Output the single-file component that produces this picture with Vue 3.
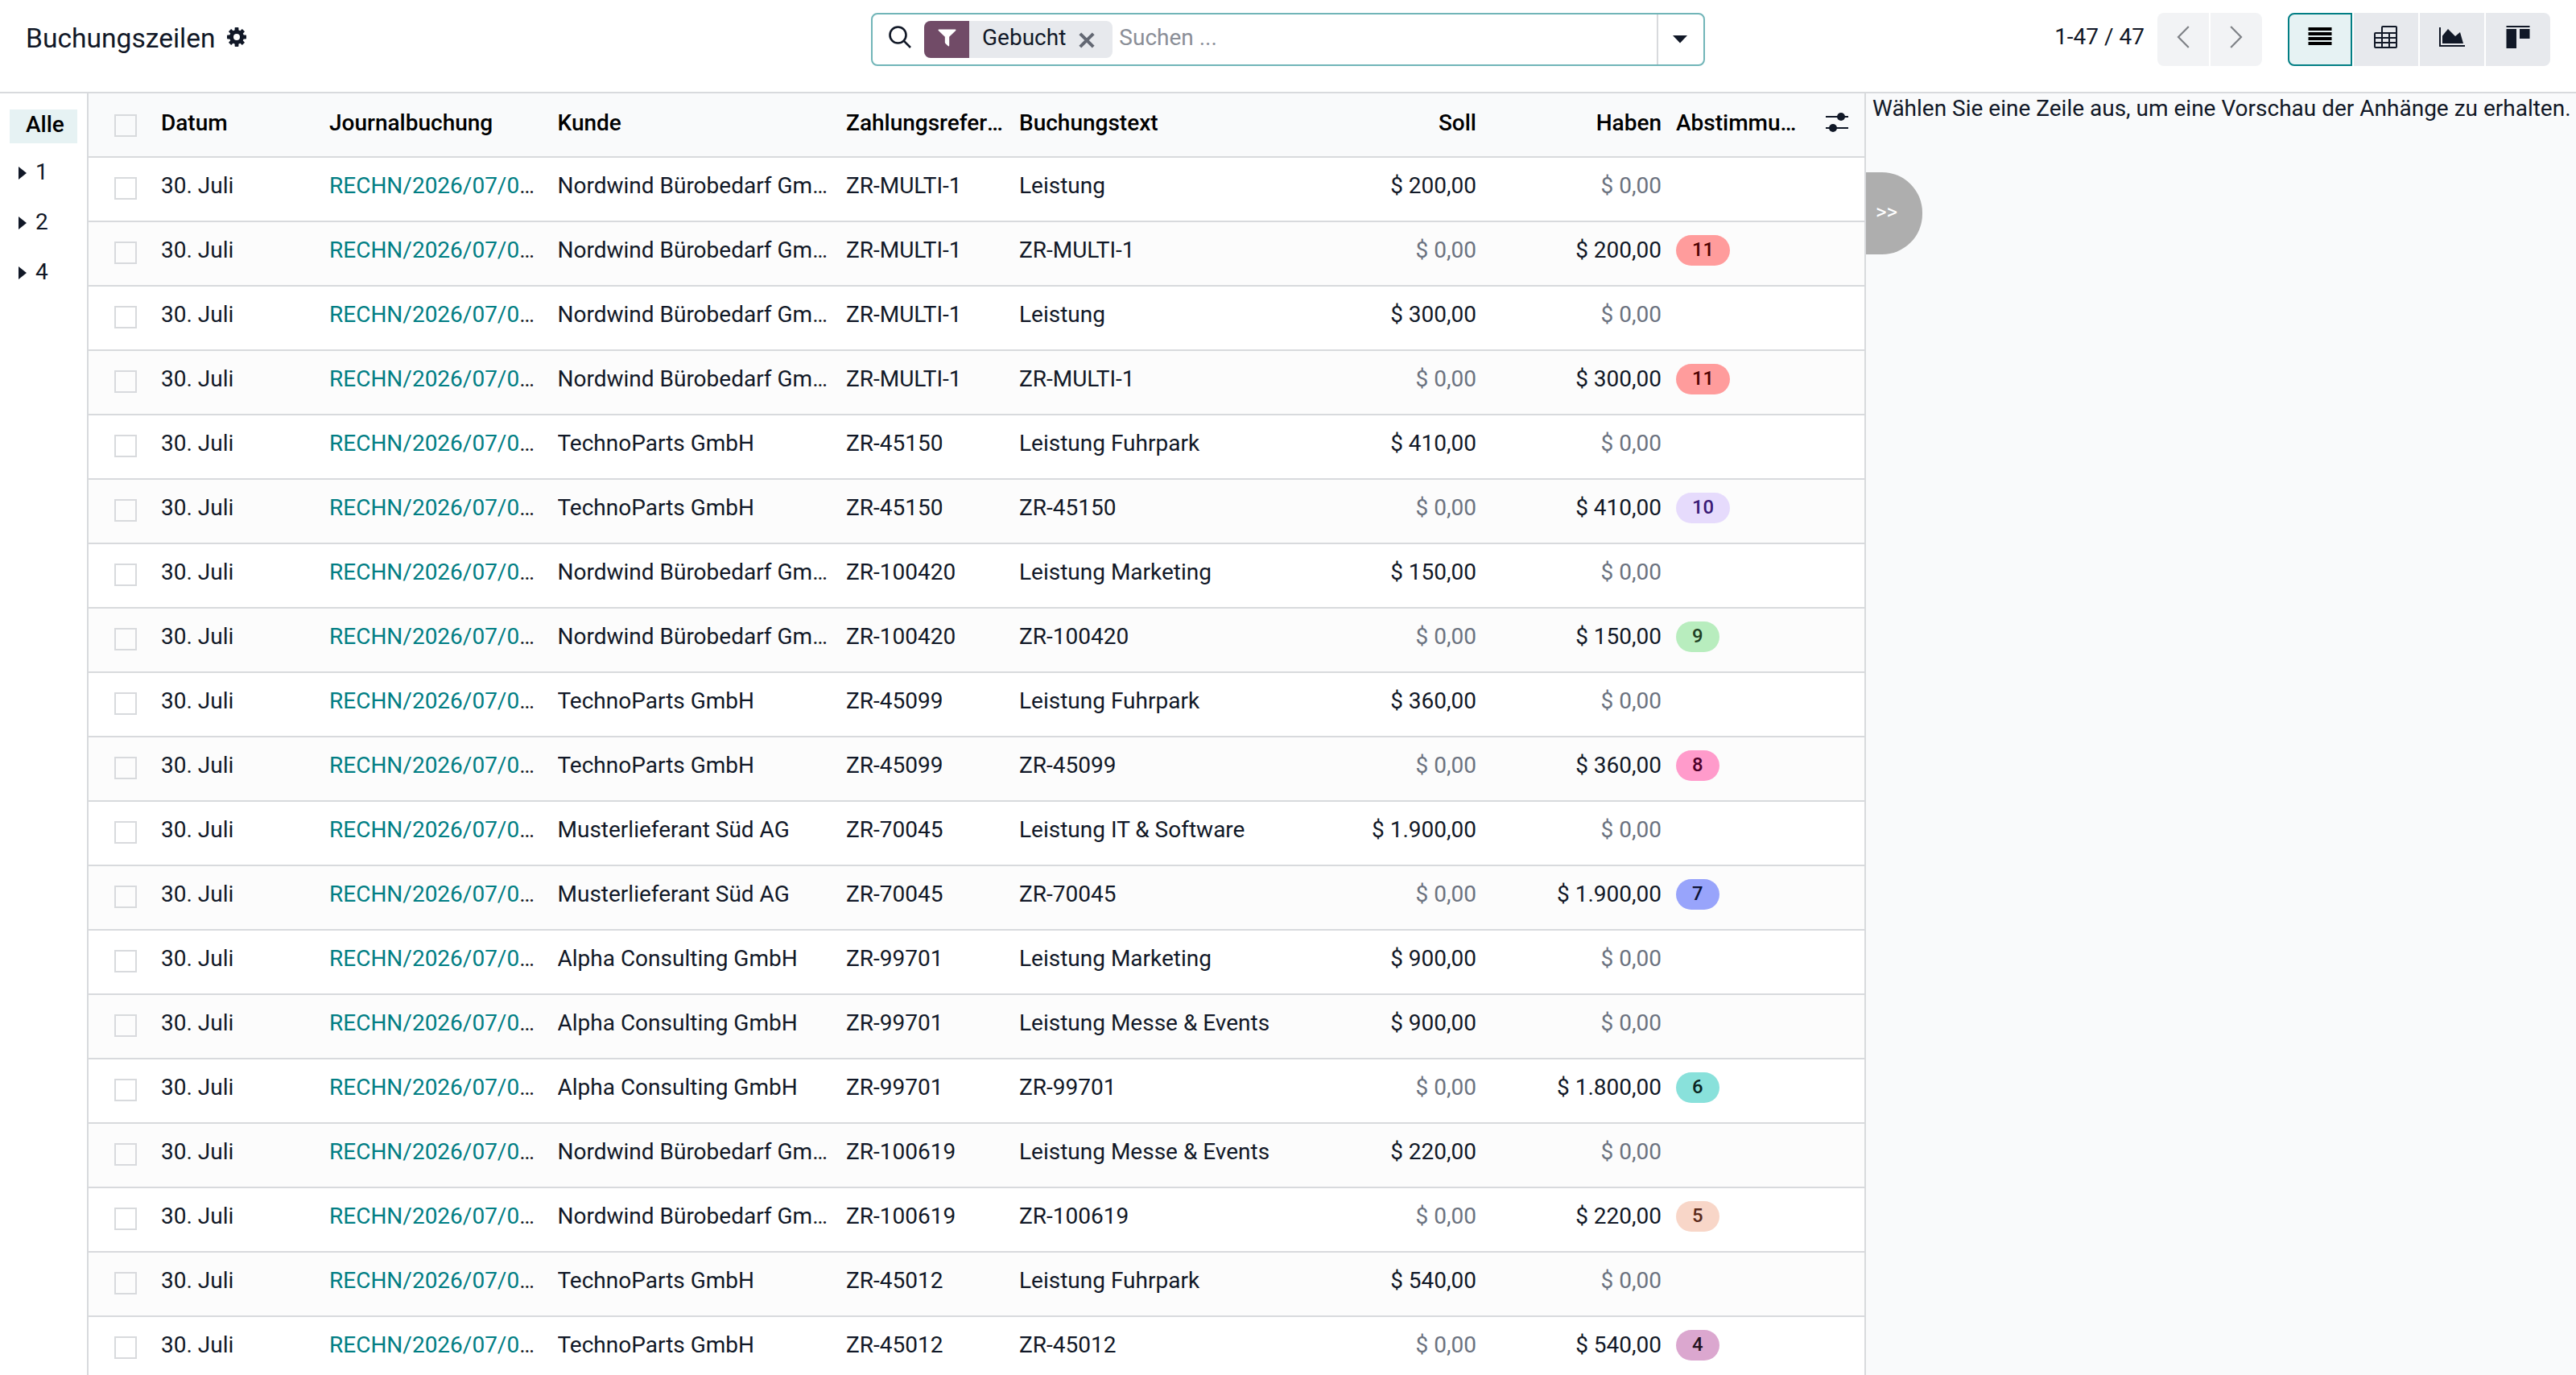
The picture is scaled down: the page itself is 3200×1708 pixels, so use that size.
<template>
    <div class="journal-items">
        <header class="control-panel">
            <div class="breadcrumb">
                <h1>Buchungszeilen</h1>
                <svg class="gear" viewBox="0 0 24 24">
                    <g fill="currentColor">
                        <rect
                            v-for="angle in [0, 45, 90, 135]"
                            :key="angle"
                            x="9.6"
                            y="0"
                            width="4.8"
                            height="24"
                            rx="0.8"
                            :transform="`rotate(${angle} 12 12)`"
                        />
                        <circle cx="12" cy="12" r="9" />
                    </g>
                    <circle cx="12" cy="12" r="4" fill="#fff" />
                </svg>
            </div>

            <div class="search">
                <svg class="search-icon" viewBox="0 0 28 28">
                    <circle cx="11.5" cy="11.5" r="10" />
                    <path d="M18.6 18.6 L27 27" />
                </svg>
                <div class="facet">
                    <span class="facet-icon">
                        <svg viewBox="0 0 24 22">
                            <path d="M1 0 H23 Q24 .8 23.2 1.7 L14.8 9.8 V21 Q14.6 22.3 13.4 21.7 L9.8 18.2 Q9.2 17.6 9.2 16.8 V9.8 L.8 1.7 Q0 .8 1 0 Z" />
                        </svg>
                    </span>
                    <span class="facet-label">Gebucht</span>
                    <svg class="facet-remove" viewBox="0 0 20 20">
                        <path d="M1.8 1.8 L18.2 18.2 M18.2 1.8 L1.8 18.2" />
                    </svg>
                </div>
                <span class="placeholder">Suchen ...</span>
                <button class="search-toggle">
                    <svg viewBox="0 0 18 10"><path d="M0 0 H18 L9 9.5 Z" /></svg>
                </button>
            </div>

            <div class="actions">
                <span class="pager-count">1-47 / 47</span>
                <div class="btn-group pager">
                    <button>
                        <svg viewBox="0 0 16 28"><path d="M14.8 1 L2 14 L14.8 27" /></svg>
                    </button>
                    <button>
                        <svg viewBox="0 0 16 28"><path d="M1.2 1 L14 14 L1.2 27" /></svg>
                    </button>
                </div>
                <div class="btn-group views">
                    <button class="active">
                        <svg viewBox="0 0 30 28">
                            <path d="M.5 2 H29.5 V6 H.5 Z M.5 8 H29.5 V12 H.5 Z M.5 14 H29.5 V18 H.5 Z M.5 20 H29.5 V24 H.5 Z" />
                        </svg>
                    </button>
                    <button>
                        <svg class="stroked" viewBox="0 0 30 28">
                            <path d="M10 9 V2 Q10 1 11 1 H27 Q28 1 28 2 V26 Q28 27 27 27 H2 Q1 27 1 26 V10 Q1 9 2 9 H28 M1 15 H28 M1 21 H28 M10 9 V27 M19 9 V27" />
                        </svg>
                    </button>
                    <button>
                        <svg viewBox="0 0 32 28">
                            <path d="M0 2 H2 V24 H32 V26 H0 Z M4 22 V12.6 L11 4 L20 13 L26 8 L30 22 Z" />
                        </svg>
                    </button>
                    <button>
                        <svg viewBox="0 0 30 28">
                            <path d="M.5 0 H29.5 V2 H.5 Z M.5 4 H13 V28 H.5 Z M17 4 H29.5 V16 H17 Z" />
                        </svg>
                    </button>
                </div>
            </div>
        </header>

        <div class="content">
            <aside class="account-groups">
                <div class="group-all">Alle</div>
                <div v-for="group in groups" :key="group" class="group">
                    <svg viewBox="0 0 10 16"><path d="M0 0 L10 8 L0 16 Z" /></svg>
                    <span>{{ group }}</span>
                </div>
            </aside>

            <main class="list">
                <div class="row head">
                    <span class="checkbox"></span>
                    <span class="cell">Datum</span>
                    <span class="cell">Journalbuchung</span>
                    <span class="cell">Kunde</span>
                    <span class="cell">Zahlungsreferenz</span>
                    <span class="cell">Buchungstext</span>
                    <span class="cell number">Soll</span>
                    <span class="cell number">Haben</span>
                    <span class="cell">Abstimmungsnummer</span>
                    <svg class="columns-toggle" viewBox="0 0 28 24">
                        <path d="M0 4 H28 V6 H0 Z M0 18 H28 V20 H0 Z" />
                        <circle cx="19" cy="5" r="5" />
                        <circle cx="9" cy="19" r="5" />
                    </svg>
                </div>

                <div v-for="(line, i) in lines" :key="i" class="row">
                    <span class="checkbox"></span>
                    <span class="cell">30. Juli</span>
                    <span class="cell"><a>RECHN/2026/07/0001</a></span>
                    <span class="cell">{{ line.partner }}</span>
                    <span class="cell">{{ line.payRef }}</span>
                    <span class="cell">{{ line.label }}</span>
                    <span class="cell number" :class="{ muted: !line.debit }">{{ money(line.debit) }}</span>
                    <span class="cell number" :class="{ muted: !line.credit }">{{ money(line.credit) }}</span>
                    <span class="cell">
                        <span v-if="line.match" class="badge" :class="`match-${line.match}`">{{ line.match }}</span>
                    </span>
                </div>
            </main>

            <section class="preview">
                <p>Wählen Sie eine Zeile aus, um eine Vorschau der Anhänge zu erhalten.</p>
                <button class="preview-toggle">&gt;&gt;</button>
            </section>
        </div>
    </div>
</template>

<script setup>
const groups = [1, 2, 4];

const nordwind = 'Nordwind Bürobedarf GmbH';
const techno = 'TechnoParts GmbH';
const muster = 'Musterlieferant Süd AG';
const alpha = 'Alpha Consulting GmbH';

const lines = [
    { partner: nordwind, payRef: 'ZR-MULTI-1', label: 'Leistung', debit: 200, credit: 0 },
    { partner: nordwind, payRef: 'ZR-MULTI-1', label: 'ZR-MULTI-1', debit: 0, credit: 200, match: 11 },
    { partner: nordwind, payRef: 'ZR-MULTI-1', label: 'Leistung', debit: 300, credit: 0 },
    { partner: nordwind, payRef: 'ZR-MULTI-1', label: 'ZR-MULTI-1', debit: 0, credit: 300, match: 11 },
    { partner: techno, payRef: 'ZR-45150', label: 'Leistung Fuhrpark', debit: 410, credit: 0 },
    { partner: techno, payRef: 'ZR-45150', label: 'ZR-45150', debit: 0, credit: 410, match: 10 },
    { partner: nordwind, payRef: 'ZR-100420', label: 'Leistung Marketing', debit: 150, credit: 0 },
    { partner: nordwind, payRef: 'ZR-100420', label: 'ZR-100420', debit: 0, credit: 150, match: 9 },
    { partner: techno, payRef: 'ZR-45099', label: 'Leistung Fuhrpark', debit: 360, credit: 0 },
    { partner: techno, payRef: 'ZR-45099', label: 'ZR-45099', debit: 0, credit: 360, match: 8 },
    { partner: muster, payRef: 'ZR-70045', label: 'Leistung IT & Software', debit: 1900, credit: 0 },
    { partner: muster, payRef: 'ZR-70045', label: 'ZR-70045', debit: 0, credit: 1900, match: 7 },
    { partner: alpha, payRef: 'ZR-99701', label: 'Leistung Marketing', debit: 900, credit: 0 },
    { partner: alpha, payRef: 'ZR-99701', label: 'Leistung Messe & Events', debit: 900, credit: 0 },
    { partner: alpha, payRef: 'ZR-99701', label: 'ZR-99701', debit: 0, credit: 1800, match: 6 },
    { partner: nordwind, payRef: 'ZR-100619', label: 'Leistung Messe & Events', debit: 220, credit: 0 },
    { partner: nordwind, payRef: 'ZR-100619', label: 'ZR-100619', debit: 0, credit: 220, match: 5 },
    { partner: techno, payRef: 'ZR-45012', label: 'Leistung Fuhrpark', debit: 540, credit: 0 },
    { partner: techno, payRef: 'ZR-45012', label: 'ZR-45012', debit: 0, credit: 540, match: 4 }
];

function money(value) {
    const whole = String(value).replace(/\B(?=(\d{3})+$)/g, '.');
    return `$ ${whole},00`;
}
</script>

<style>
body {
    margin: 0;
    overflow: hidden;
}
</style>

<style scoped>
.journal-items {
    display: flex;
    flex-direction: column;
    height: 100vh;
    overflow: hidden;
    background: #fff;
    color: #111827;
    font-family: Roboto, "Liberation Sans", sans-serif;
    font-size: 28px;
    line-height: 42px;
}

.journal-items *,
.journal-items {
    box-sizing: border-box;
}

svg {
    display: block;
    flex-shrink: 0;
    fill: currentColor;
}

button {
    display: flex;
    align-items: center;
    justify-content: center;
    padding: 0;
    border: 0;
    color: inherit;
    font: inherit;
}

/* ─── Control panel ───────────────────────────── */
.control-panel {
    display: grid;
    grid-template-columns: 1050px 1036px 1fr;
    flex-shrink: 0;
    height: 116px;
    padding: 16px 32px 0;
    border-bottom: 2px solid #d8dadd;
}

.breadcrumb {
    display: flex;
    gap: 14px;
    height: 60px;
}

h1 {
    margin: 7px 0 0;
    font-size: 33.6px;
    font-weight: 400;
    line-height: 49px;
}

.gear {
    width: 24px;
    height: 24px;
    margin-top: 18px;
}

/* ─── Search ──────────────────────────────────── */
.search {
    display: flex;
    height: 66px;
    padding-left: 20px;
    border: 2px solid #71b5b8;
    border-radius: 8px;
}

.search-icon {
    width: 28px;
    height: 28px;
    margin-top: 14px;
    fill: none;
    stroke: currentColor;
    stroke-width: 2.6;
}

.facet {
    display: flex;
    height: 46px;
    margin: 8px 0 0 16px;
    border-radius: 8px;
    background: #e7e9ed;
    overflow: hidden;
}

.facet-icon {
    width: 56px;
    padding: 10px 0 0 17px;
    background: #714b67;
    color: #fff;
}

.facet-icon svg {
    width: 23px;
    height: 22px;
}

.facet-label {
    margin: 0 0 0 16px;
}

.facet-remove {
    width: 20px;
    height: 20px;
    margin: 14px 22px 0 16px;
    fill: none;
    stroke: #636873;
    stroke-width: 4;
}

.placeholder {
    flex: 1;
    margin: 8px 0 0 8px;
    color: #8a8e97;
}

.search-toggle {
    width: 58px;
    padding-right: 2px;
    border-left: 2px solid #d8dadd;
    background: none;
}

.search-toggle svg {
    width: 18px;
    height: 10px;
}

/* ─── Pager & views ───────────────────────────── */
.actions {
    display: flex;
    justify-content: flex-end;
}

.pager-count {
    margin: 9px 16px 0 0;
}

.btn-group {
    display: flex;
    gap: 2px;
}

.btn-group button {
    align-items: flex-start;
    height: 66px;
    padding-top: 16px;
}

.btn-group button:first-child {
    border-radius: 8px 0 0 8px;
}

.btn-group button:last-child {
    border-radius: 0 8px 8px 0;
}

.btn-group svg {
    width: 30px;
    height: 28px;
}

.pager button {
    width: 64px;
    background: #f2f3f5;
    color: #7f8287;
}

.pager svg {
    width: 16px;
    fill: none;
    stroke: currentColor;
    stroke-width: 2.2;
}

.views {
    margin-left: 32px;
}

.views button {
    width: 80px;
    background: #e7e9ed;
}

.views button:nth-child(3) svg {
    width: 32px;
}

.views button.active {
    padding-top: 14px;
    border: 2px solid #017e84;
    background: #e6f2f3;
    color: #000;
}

.views .stroked {
    fill: none;
    stroke: currentColor;
    stroke-width: 2;
}

/* ─── Content ─────────────────────────────────── */
.content {
    display: grid;
    grid-template-columns: 110px 2208px 1fr;
    flex: 1;
    min-height: 0;
}

.account-groups {
    padding: 20px 12px 0;
    border-right: 2px solid #d8dadd;
}

.group-all {
    width: 84px;
    height: 42px;
    margin-bottom: 7px;
    padding-left: 20px;
    background: #e6f2f3;
    color: #000;
    font-weight: 500;
    line-height: 38px;
}

.group {
    display: flex;
    align-items: center;
    gap: 11px;
    height: 62px;
    padding: 0 0 4px 11px;
}

.group svg {
    width: 10px;
    height: 16px;
    margin-top: 2px;
}

/* ─── List ────────────────────────────────────── */
.list {
    border-right: 2px solid #d8dadd;
    overflow: hidden;
}

.row {
    display: grid;
    grid-template-columns: 58px 209px 283.5px 358.5px 215px 388px 198px 230px 179px 1fr;
    height: 80px;
    padding: 14px 0 0 32px;
    border-bottom: 2px solid #d8dadd;
}

.row:nth-child(odd) {
    background: #fcfcfc;
}

.row.head {
    padding-top: 16px;
    background: #f9fafb;
    color: #000;
    font-weight: 500;
}

.cell {
    height: 48px;
    padding-right: 18px;
    overflow: hidden;
    text-overflow: ellipsis;
    white-space: nowrap;
}

.cell a {
    color: #017e84;
}

.number {
    text-align: right;
}

.muted {
    color: #6b7280;
}

.checkbox {
    width: 28px;
    height: 28px;
    margin-top: 10px;
    border: 2px solid #d8dadd;
}

.columns-toggle {
    width: 28px;
    height: 24px;
    margin: 8px 0 0 7px;
    color: #111827;
}

.badge {
    display: block;
    width: max-content;
    height: 38px;
    margin-top: 2px;
    padding: 0 20px;
    border-radius: 19px;
    font-size: 23.8px;
    font-weight: 500;
    line-height: 36px;
}

.match-11 {
    background: #ff9c9c;
    color: #4d0000;
}

.match-10 {
    background: #e6dbfc;
    color: #3a1a75;
}

.match-9 {
    background: #b8edbe;
    color: #1f4023;
}

.match-8 {
    background: #ff9bcb;
    color: #4d0029;
}

.match-7 {
    background: #98a4fb;
    color: #0e1334;
}

.match-6 {
    background: #89e1db;
    color: #0b2422;
}

.match-5 {
    background: #f8d6c8;
    color: #5a2a1c;
}

.match-4 {
    background: #dba7cf;
    color: #23141f;
}

/* ─── Attachment preview ──────────────────────── */
.preview {
    background: #f9fafb;
}

.preview p {
    height: 98px;
    margin: 0;
    padding: 0 0 0 8px;
    line-height: 38px;
    white-space: nowrap;
}

.preview-toggle {
    justify-content: flex-start;
    width: 70px;
    height: 102px;
    padding: 0 0 4px 12px;
    border-radius: 0 50px 50px 0;
    background: #aeaeae;
    color: #fff;
    font-size: 26px;
}
</style>
